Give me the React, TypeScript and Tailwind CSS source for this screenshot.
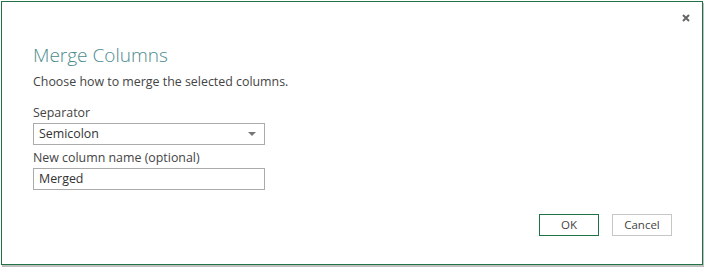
export default function App() {
  return (
    <div className="w-[704px] h-[267px] bg-white overflow-hidden" style={{ fontFamily: '"Open Sans", "Noto Sans", sans-serif' }}>
      <div className="ml-[1px] mt-[1px] w-[702px] h-[264px] border border-[#217346] bg-white shadow-[1px_2px_1px_rgba(0,0,0,0.25)] flex flex-col relative">
        <button className="absolute right-[10px] top-[10px] w-[12px] h-[12px] flex items-center justify-center">
          <svg width="8" height="8" viewBox="0 0 8 8">
            <path d="M1 1L7 7M7 1L1 7" stroke="#666" strokeWidth="2" />
          </svg>
        </button>

        <div className="pl-[31px] pr-[30px] flex flex-col">
          <h1 className="mt-[39px] text-[19px] leading-[28px] font-light text-[#4b8b8d]">Merge Columns</h1>
          <p className="mt-[5px] text-[12.4px] leading-[16px] text-[#444]">Choose how to merge the selected columns.</p>

          <label className="mt-[15px] text-[12.4px] leading-[16px] text-[#444]">Separator</label>
          <div className="mt-[2px] w-[232px] h-[22px] border border-[#ababab] flex items-center justify-between pl-[5px] pr-[8px]">
            <span className="text-[12.4px] text-[#333]">Semicolon</span>
            <svg width="8" height="4" viewBox="0 0 8 4">
              <path d="M0 0H8L4 4Z" fill="#777" />
            </svg>
          </div>

          <label className="mt-[5px] text-[12.4px] leading-[16px] text-[#444]">New column name (optional)</label>
          <div className="mt-[2px] w-[232px] h-[22px] border border-[#ababab] flex items-center pl-[5px]">
            <span className="text-[12.4px] text-[#333]">Merged</span>
          </div>

          <div className="mt-[24px] flex justify-end gap-[13px]">
            <button className="w-[60px] h-[22px] border border-[#217346] text-[11.5px] text-[#444]">OK</button>
            <button className="w-[60px] h-[22px] border border-[#c6c6c6] text-[11.5px] text-[#444]">Cancel</button>
          </div>
        </div>
      </div>
    </div>
  )
}
